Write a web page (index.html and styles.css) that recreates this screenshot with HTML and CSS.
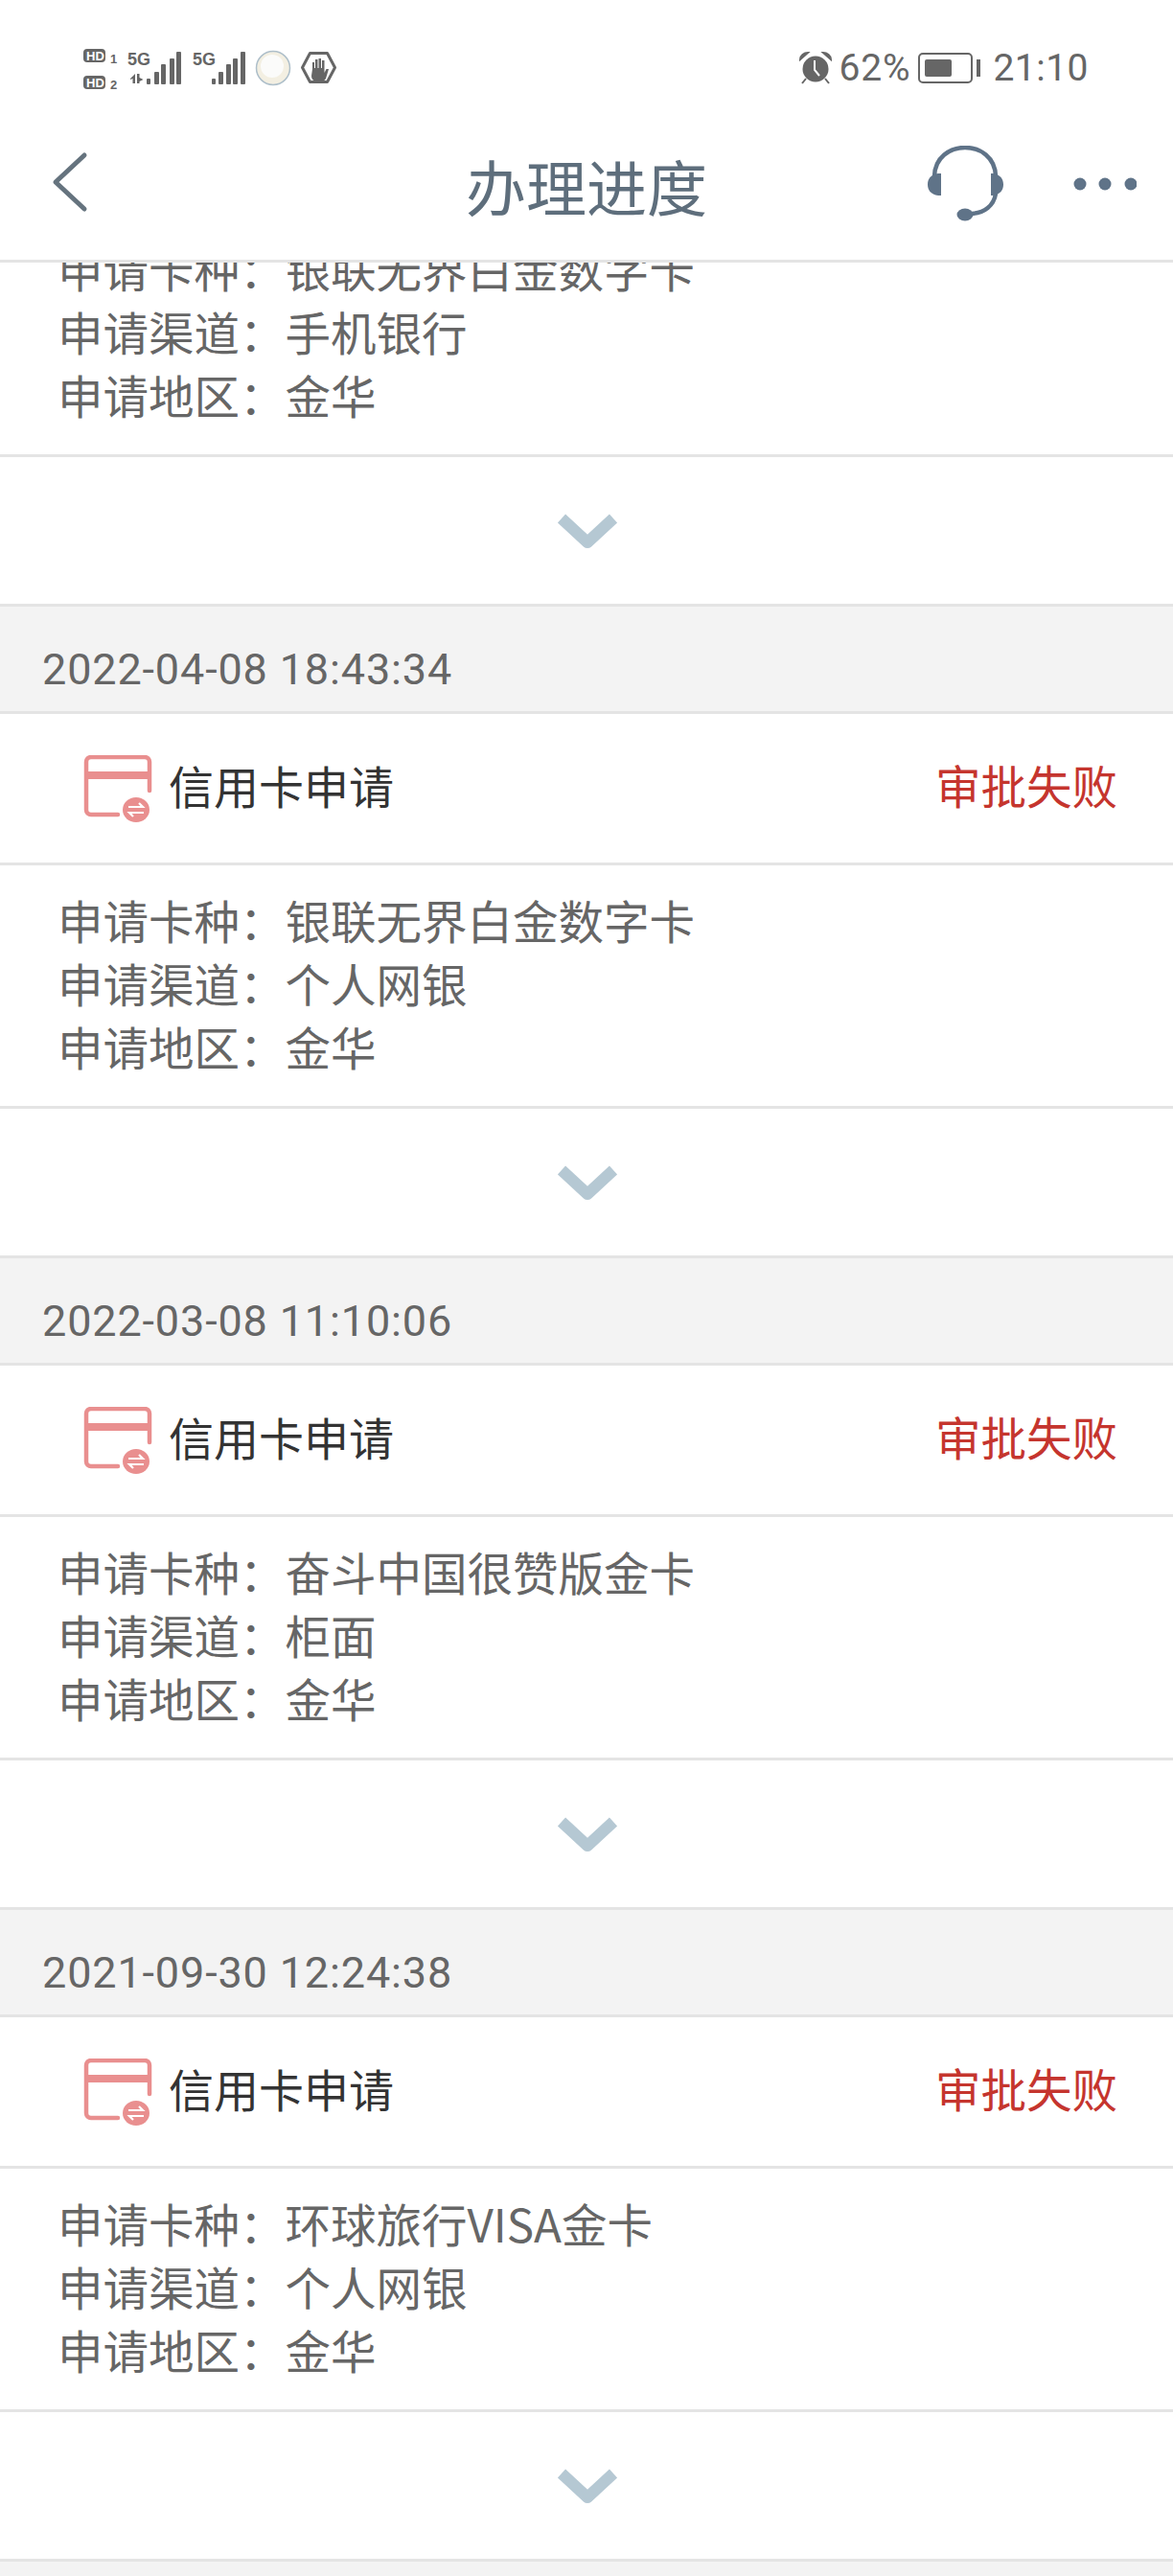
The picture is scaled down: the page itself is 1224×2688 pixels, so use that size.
FILE: index.html
```html
<!DOCTYPE html>
<html lang="zh-CN">

<head>
    <meta charset="UTF-8">
    <title>办理进度</title>
    <link rel="stylesheet" href="styles.css">
</head>

<body>

    <svg class="sprite" width="0" height="0">
        <symbol id="card-icon" viewBox="0 0 76 70">
            <path d="M36 62H8a5 5 0 0 1-5-5V7a5 5 0 0 1 5-5h56a5 5 0 0 1 5 5v30" fill="none" stroke="#e98f8f" stroke-width="4.500" stroke-linecap="round"/>
            <rect x="3" y="17" width="66" height="8" fill="#e98f8f"/>
            <ellipse cx="55" cy="57" rx="14" ry="13" fill="#e98f8f"/>
            <path d="M47 54h15l-4-4M63 60H48l4 4" fill="none" stroke="#fff" stroke-width="2.200"/>
        </symbol>
        <symbol id="chevron-down" viewBox="0 0 66 40">
            <path d="M6 7l27 25L60 7" fill="none" stroke="#b5c8d3" stroke-width="12" stroke-linejoin="round"/>
        </symbol>
    </svg>

    <div class="status-bar">
        <svg class="status-left" width="270" height="44" viewBox="0 0 270 44">
            <g fill="#666">
                <rect x="0" y="0" width="23" height="14" rx="4"/>
                <rect x="0" y="28" width="23" height="14" rx="4"/>
                <text x="3" y="11.500" class="tiny-label tiny-inv">HD</text>
                <text x="3" y="39.500" class="tiny-label tiny-inv">HD</text>
                <text x="28" y="15" class="tiny-label">1</text>
                <text x="28" y="42" class="tiny-label">2</text>
                <text x="46" y="17" class="net-label">5G</text>
                <path d="M49 31l5-5v10h-2.500v-5l-2.500 1zM56 26h2.500v4l4 2-4 2v2H56z"/>
                <rect x="66" y="31" width="4" height="6" rx="1"/>
                <rect x="74" y="24" width="5" height="13" rx="1"/>
                <rect x="81" y="16" width="5" height="21" rx="1"/>
                <rect x="90" y="10" width="5" height="27" rx="1"/>
                <rect x="97" y="3" width="5" height="34" rx="1"/>
                <text x="114" y="17" class="net-label">5G</text>
                <rect x="134" y="31" width="4" height="6" rx="1"/>
                <rect x="141" y="24" width="5" height="13" rx="1"/>
                <rect x="149" y="16" width="5" height="21" rx="1"/>
                <rect x="156" y="10" width="5" height="27" rx="1"/>
                <rect x="164" y="3" width="5" height="34" rx="1"/>
            </g>
            <circle cx="198" cy="20" r="17.500" fill="#f3efe2" stroke="#aebfca" stroke-width="1.500"/>
            <circle cx="197" cy="18" r="12" fill="#fbfbfa"/>
            <path d="M228.500 19.500l8-15h18l8 15-8 15h-18z" fill="none" stroke="#666" stroke-width="3" stroke-linejoin="round"/>
            <path d="M239 21v-7h2v6h1V11h2.500v9h1V10h2.500v10h1v-8h2.500v13l2-4h2.500l-3 10c-1 2-3 3-5 3h-4c-3 0-6-2-6-6z" fill="#666"/>
        </svg>
        <div class="status-right">
            <svg width="34" height="34" viewBox="0 0 34 34">
                <circle cx="17" cy="18" r="13.500" fill="#666"/>
                <path d="M1 8c0-4 4-7 8-7zM33 8c0-4-4-7-8-7zM7 28l-4 5M27 28l4 5" fill="#666" stroke="#666" stroke-width="2"/>
                <path d="M16 9v10l5 6" fill="none" stroke="#fff" stroke-width="2"/>
            </svg>
            <span class="percent">62%</span>
            <div class="battery">
                <div class="battery-fill"></div>
            </div>
            <div class="battery-nub"></div>
            <span class="clock">21:10</span>
        </div>
    </div>

    <div class="nav-bar">
        <div class="nav-left">
            <svg width="44" height="68" viewBox="0 0 44 68">
                <path d="M36 4L6 32l30 28" fill="none" stroke="#65737e" stroke-width="5" stroke-linecap="round" stroke-linejoin="round"/>
            </svg>
        </div>
        <h1 class="nav-title">办理进度</h1>
        <div class="nav-right">
            <svg width="80" height="80" viewBox="0 0 80 80">
                <path d="M8 32C9 -8 71 -8 72 32" fill="none" stroke="#5f7388" stroke-width="4.500"/>
                <path d="M15 29H12C4 30 1 35 1 40.500S4 51 12 52h3zM67 29h2c8 1 11 6 11 11.500S77 51 69 52h-2z" fill="#5f7388"/>
                <path d="M72 50C70 63 60 70 47 71" fill="none" stroke="#5f7388" stroke-width="4.500"/>
                <ellipse cx="40" cy="72" rx="8.500" ry="6.500" fill="#5f7388"/>
            </svg>
            <svg width="66" height="14" viewBox="0 0 66 14">
                <circle cx="7" cy="7" r="6.500" fill="#5f7388"/>
                <circle cx="33" cy="7" r="6.500" fill="#5f7388"/>
                <circle cx="60" cy="7" r="6.500" fill="#5f7388"/>
            </svg>
        </div>
    </div>

    <div class="list">
        <div class="detail first-detail">
            <p>申请卡种：银联无界白金数字卡</p>
            <p>申请渠道：手机银行</p>
            <p>申请地区：金华</p>
        </div>
        <div class="expand"><svg width="66" height="40"><use href="#chevron-down"/></svg></div>

        <div class="date">2022-04-08 18:43:34</div>
        <div class="head">
            <svg class="card-icon" width="76" height="70"><use href="#card-icon"/></svg>
            <span class="head-name">信用卡申请</span>
            <span class="head-status">审批失败</span>
        </div>
        <div class="detail">
            <p>申请卡种：银联无界白金数字卡</p>
            <p>申请渠道：个人网银</p>
            <p>申请地区：金华</p>
        </div>
        <div class="expand"><svg width="66" height="40"><use href="#chevron-down"/></svg></div>

        <div class="date">2022-03-08 11:10:06</div>
        <div class="head">
            <svg class="card-icon" width="76" height="70"><use href="#card-icon"/></svg>
            <span class="head-name">信用卡申请</span>
            <span class="head-status">审批失败</span>
        </div>
        <div class="detail">
            <p>申请卡种：奋斗中国很赞版金卡</p>
            <p>申请渠道：柜面</p>
            <p>申请地区：金华</p>
        </div>
        <div class="expand"><svg width="66" height="40"><use href="#chevron-down"/></svg></div>

        <div class="date">2021-09-30 12:24:38</div>
        <div class="head">
            <svg class="card-icon" width="76" height="70"><use href="#card-icon"/></svg>
            <span class="head-name">信用卡申请</span>
            <span class="head-status">审批失败</span>
        </div>
        <div class="detail">
            <p>申请卡种：环球旅行VISA金卡</p>
            <p>申请渠道：个人网银</p>
            <p>申请地区：金华</p>
        </div>
        <div class="expand"><svg width="66" height="40"><use href="#chevron-down"/></svg></div>

        <div class="date"></div>
    </div>

</body>

</html>
```

FILE: styles.css
```css
html,
body {
    margin: 0;
    height: 2688px;
    overflow: hidden;
}

body {
    font-family: "Noto Sans CJK SC", "Noto Sans", sans-serif;
    background-color: #fff;
}

.sprite {
    display: block;
}

.status-bar {
    height: 130px;
    padding: 51px 88px 0 87px;
    box-sizing: border-box;
    display: flex;
    justify-content: space-between;
    align-items: flex-start;
}

.status-right {
    display: flex;
    align-items: center;
    height: 40px;
    color: #666;
    font-family: Roboto, sans-serif;
    font-size: 39px;
}

.tiny-label {
    font-family: "Liberation Sans", sans-serif;
    font-size: 13px;
    font-weight: bold;
}

.tiny-inv {
    fill: #fff;
}

.net-label {
    font-family: "Liberation Sans", sans-serif;
    font-size: 18px;
    font-weight: bold;
}

.percent {
    margin-left: 8px;
    letter-spacing: 0.8px;
}

.battery {
    width: 57px;
    height: 32px;
    margin-left: 8px;
    padding: 5px;
    box-sizing: border-box;
    border: 2px solid #666;
    border-radius: 5px;
}

.battery-fill {
    width: 28px;
    height: 100%;
    background-color: #666;
    border-radius: 2px;
}

.battery-nub {
    width: 4px;
    height: 18px;
    margin-left: 4px;
    background-color: #666;
}

.clock {
    margin-left: 13px;
    letter-spacing: 0.5px;
}

.nav-bar {
    height: 144px;
    padding-bottom: 17px;
    display: grid;
    grid-template-columns: 1fr auto 1fr;
    align-items: center;
    box-sizing: border-box;
    border-bottom: 3px solid #e4e4e4;
}

.nav-left {
    padding-left: 52px;
    display: flex;
}

.nav-title {
    margin: 0;
    color: #5e6e7c;
    font-size: 63px;
    font-weight: normal;
}

.nav-right {
    display: flex;
    justify-content: flex-end;
    align-items: center;
    gap: 73px;
    padding-right: 38px;
}

.list {
    overflow: hidden;
}

.date {
    height: 115px;
    padding: 41px 0 0 44px;
    box-sizing: border-box;
    background-color: #f3f3f3;
    border-top: 3px solid #e4e4e4;
    border-bottom: 3px solid #e4e4e4;
    color: #666;
    font-family: Roboto, sans-serif;
    font-size: 45px;
    letter-spacing: 0.85px;
    line-height: 50px;
}

.head {
    height: 158px;
    padding: 0 58px 0 87px;
    box-sizing: border-box;
    display: flex;
    align-items: center;
    border-bottom: 3px solid #e4e4e4;
}

.card-icon {
    margin-right: 13px;
}

.head-name {
    flex: 1;
    padding-bottom: 8px;
    color: #333;
    font-size: 47px;
}

.head-status {
    padding-bottom: 8px;
    color: #c5352e;
    font-size: 47.5px;
}

.detail {
    height: 254px;
    padding: 24px 0 0 60px;
    box-sizing: border-box;
    border-bottom: 3px solid #e4e4e4;
    color: #666;
    font-size: 47.5px;
}

.first-detail {
    margin-top: -51px;
}

.detail p {
    margin: 0;
    height: 66px;
    line-height: 66px;
}

.expand {
    height: 153px;
    padding-left: 2px;
    display: flex;
    justify-content: center;
    align-items: center;
}
```
